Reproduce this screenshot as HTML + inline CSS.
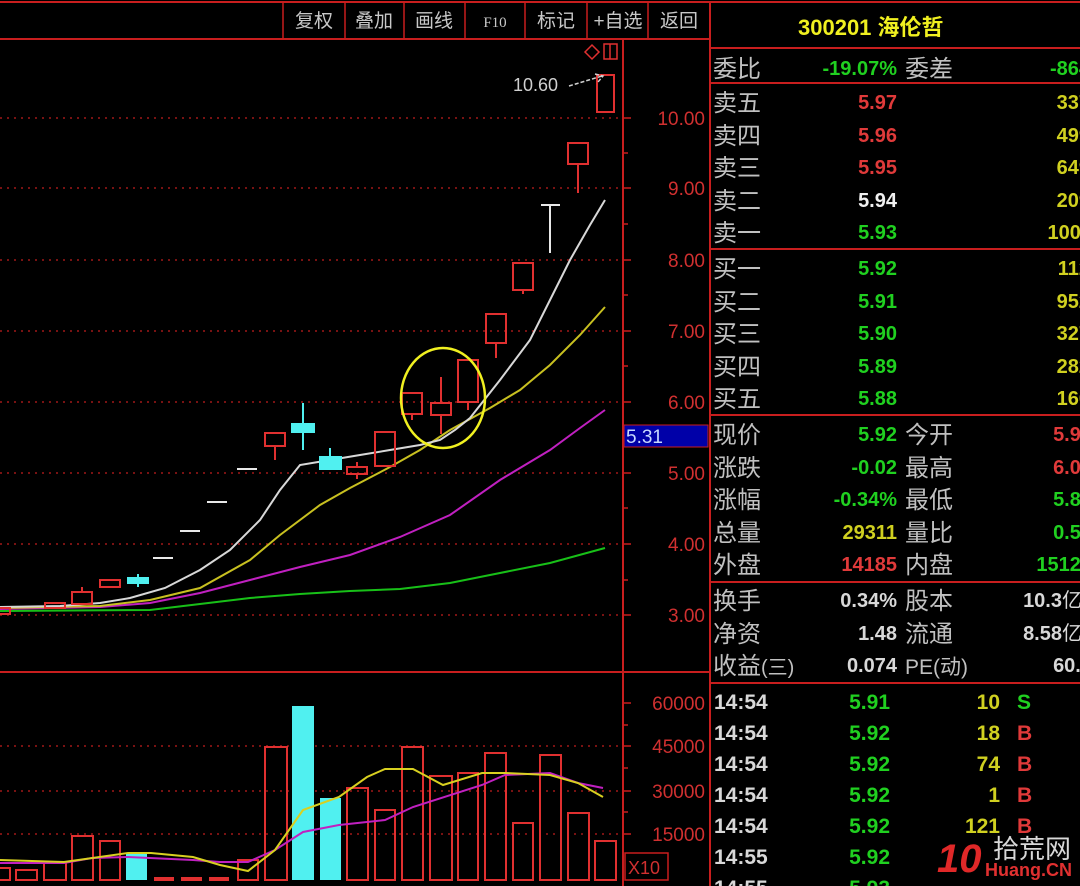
<!DOCTYPE html>
<html><head><meta charset="utf-8"><style>
html,body{margin:0;padding:0;background:#000;width:1080px;height:886px;overflow:hidden}
svg{display:block}
.cj{font-family:"Liberation Sans","WenQuanYi Zen Hei","Noto Sans CJK SC",sans-serif}
.nb{font-family:"Liberation Sans",sans-serif;font-weight:bold}
</style></head><body>
<svg width="1080" height="886" viewBox="0 0 1080 886" xmlns="http://www.w3.org/2000/svg">
<rect width="1080" height="886" fill="#000"/>
<!-- frame lines -->
<g stroke="#c81e1e" stroke-width="2" fill="none">
<line x1="0" y1="2" x2="1080" y2="2"/>
<line x1="0" y1="39" x2="710" y2="39"/>
<line x1="710" y1="2" x2="710" y2="886"/>
<line x1="623" y1="39" x2="623" y2="886"/>
<line x1="0" y1="672" x2="710" y2="672"/>
<line x1="710" y1="48" x2="1080" y2="48"/>
<line x1="710" y1="83" x2="1080" y2="83"/>
<line x1="710" y1="249" x2="1080" y2="249"/>
<line x1="710" y1="415" x2="1080" y2="415"/>
<line x1="710" y1="582" x2="1080" y2="582"/>
<line x1="710" y1="683" x2="1080" y2="683"/>
</g>
<g stroke="#c81e1e" stroke-width="1.5">
<line x1="283" y1="2" x2="283" y2="39"/><line x1="345" y1="2" x2="345" y2="39"/><line x1="404" y1="2" x2="404" y2="39"/><line x1="465" y1="2" x2="465" y2="39"/><line x1="525" y1="2" x2="525" y2="39"/><line x1="587" y1="2" x2="587" y2="39"/><line x1="648" y1="2" x2="648" y2="39"/>
</g>
<g class="cj" fill="#c8c8c8" font-size="19" text-anchor="middle">
<text x="314" y="27">复权</text><text x="374" y="27">叠加</text><text x="434" y="27">画线</text><text x="495" y="27" font-size="15" font-family="Liberation Serif">F10</text><text x="556" y="27">标记</text><text x="618" y="27">+自选</text><text x="679" y="27">返回</text>
</g>
<!-- grid -->
<g stroke="#a01818" stroke-width="1.5" stroke-dasharray="2 5">
<line x1="0" y1="118" x2="620" y2="118"/><line x1="0" y1="188" x2="620" y2="188"/><line x1="0" y1="260" x2="620" y2="260"/><line x1="0" y1="331" x2="620" y2="331"/><line x1="0" y1="402" x2="620" y2="402"/><line x1="0" y1="473" x2="620" y2="473"/><line x1="0" y1="544" x2="620" y2="544"/><line x1="0" y1="615" x2="620" y2="615"/>
<line x1="0" y1="746" x2="620" y2="746"/><line x1="0" y1="791" x2="620" y2="791"/><line x1="0" y1="834" x2="620" y2="834"/>
</g>
<!-- axis ticks -->
<g stroke="#c81e1e" stroke-width="1.5">
<line x1="623" y1="118" x2="631" y2="118"/><line x1="623" y1="153" x2="628" y2="153"/><line x1="623" y1="188" x2="631" y2="188"/><line x1="623" y1="224" x2="628" y2="224"/><line x1="623" y1="260" x2="631" y2="260"/><line x1="623" y1="295" x2="628" y2="295"/><line x1="623" y1="331" x2="631" y2="331"/><line x1="623" y1="366" x2="628" y2="366"/><line x1="623" y1="402" x2="631" y2="402"/><line x1="623" y1="473" x2="631" y2="473"/><line x1="623" y1="508" x2="628" y2="508"/><line x1="623" y1="544" x2="631" y2="544"/><line x1="623" y1="580" x2="628" y2="580"/><line x1="623" y1="615" x2="631" y2="615"/>
<line x1="623" y1="703" x2="631" y2="703"/><line x1="623" y1="725" x2="628" y2="725"/><line x1="623" y1="746" x2="631" y2="746"/><line x1="623" y1="768" x2="628" y2="768"/><line x1="623" y1="791" x2="631" y2="791"/><line x1="623" y1="812" x2="628" y2="812"/><line x1="623" y1="834" x2="631" y2="834"/>
</g>
<g font-family="Liberation Sans,sans-serif" font-size="19" fill="#d03030" text-anchor="end">
<text x="705" y="125">10.00</text><text x="705" y="195">9.00</text><text x="705" y="267">8.00</text><text x="705" y="338">7.00</text><text x="705" y="409">6.00</text><text x="705" y="480">5.00</text><text x="705" y="551">4.00</text><text x="705" y="622">3.00</text>
<text x="705" y="710">60000</text><text x="705" y="753">45000</text><text x="705" y="798">30000</text><text x="705" y="841">15000</text>
</g>
<rect x="624" y="425" width="84" height="22" fill="#0000a8" stroke="#c81e1e" stroke-width="1"/>
<text x="626" y="443" font-family="Liberation Sans,sans-serif" font-size="19" fill="#c8d8ff">5.31</text>
<rect x="625" y="853" width="43" height="27" fill="none" stroke="#c81e1e" stroke-width="1.5"/>
<text x="628" y="874" font-family="Liberation Sans,sans-serif" font-size="18" fill="#d03030">X10</text>
<!-- MA lines -->
<g fill="none" stroke-width="2">
<polyline stroke="#18c018" points="0,611 150,610 200,604 250,598 300,594 350,591 400,589 450,583 500,573 550,563 605,548"/>
<polyline stroke="#c020c0" points="0,609 100,607 150,603 200,593 250,580 300,567 350,555 400,537 450,515 500,480 550,450 580,428 605,410"/>
<polyline stroke="#c8c020" points="0,608 100,606 150,600 200,588 250,560 280,535 320,505 350,488 390,467 420,450 450,430 490,408 520,390 550,365 580,335 605,307"/>
<polyline stroke="#d8d8d8" points="0,607 60,606 100,603 130,598 165,588 200,570 230,550 260,520 280,490 300,465 330,460 360,455 390,450 420,445 440,440 455,430 470,418 500,380 530,340 550,300 570,260 590,225 605,200"/>
</g>
<!-- candles -->
<g fill="none" stroke="#e03030" stroke-width="2">
<rect x="-4" y="608" width="14" height="6"/>
<rect x="45" y="603" width="20" height="5"/>
<rect x="72" y="592" width="20" height="12"/><line x1="82" y1="587" x2="82" y2="592"/>
<rect x="100" y="580" width="20" height="7"/>
<rect x="265" y="433" width="20" height="13"/><line x1="275" y1="446" x2="275" y2="460"/>
<rect x="347" y="467" width="20" height="7"/><line x1="357" y1="462" x2="357" y2="467"/><line x1="357" y1="474" x2="357" y2="479"/>
<rect x="375" y="432" width="20" height="34"/>
<rect x="402" y="393" width="20" height="21"/><line x1="412" y1="414" x2="412" y2="420"/>
<rect x="431" y="403" width="20" height="12"/><line x1="441" y1="377" x2="441" y2="403"/><line x1="441" y1="415" x2="441" y2="434"/>
<rect x="458" y="360" width="20" height="42"/><line x1="468" y1="402" x2="468" y2="410"/>
<rect x="486" y="314" width="20" height="29"/><line x1="496" y1="343" x2="496" y2="358"/>
<rect x="513" y="263" width="20" height="27"/><line x1="523" y1="290" x2="523" y2="294"/>
<rect x="568" y="143" width="20" height="21"/><line x1="578" y1="164" x2="578" y2="193"/>
<rect x="597" y="75" width="17" height="37"/>
<rect x="604" y="44" width="13" height="15" stroke-width="1.5"/><line x1="610" y1="44" x2="610" y2="59" stroke-width="1.5"/>
<path d="M585,52 L592,45 L599,52 L592,59 Z" stroke-width="1.5"/>
</g>
<g fill="#50f0f0" stroke="#50f0f0" stroke-width="2">
<rect x="128" y="578" width="20" height="5"/><line x1="138" y1="574" x2="138" y2="587"/>
<rect x="292" y="424" width="22" height="8"/><line x1="303" y1="403" x2="303" y2="450"/>
<rect x="320" y="457" width="21" height="12"/><line x1="330" y1="448" x2="330" y2="457"/>
</g>
<g stroke="#e8e8e8" stroke-width="2">
<line x1="153" y1="558" x2="173" y2="558"/><line x1="180" y1="531" x2="200" y2="531"/><line x1="207" y1="502" x2="227" y2="502"/><line x1="237" y1="469" x2="257" y2="469"/>
<line x1="541" y1="205" x2="560" y2="205"/><line x1="550" y1="205" x2="550" y2="253"/>
</g>
<ellipse cx="443" cy="398" rx="42" ry="50" fill="none" stroke="#f0f020" stroke-width="2.5"/>
<text x="513" y="91" font-family="Liberation Sans,sans-serif" font-size="18" fill="#d0d0d0">10.60</text>
<path d="M569,86 L602,76 M595,74 L603,76 L598,82" stroke="#d0d0d0" stroke-width="1.5" fill="none" stroke-dasharray="4 2"/>
<!-- volume bars -->
<g fill="none" stroke="#e03030" stroke-width="2">
<rect x="-2" y="868" width="12" height="12"/><rect x="16" y="870" width="21" height="10"/><rect x="44" y="862" width="22" height="18"/><rect x="72" y="836" width="21" height="44"/><rect x="100" y="841" width="20" height="39"/>
<rect x="238" y="860" width="20" height="20"/><rect x="265" y="747" width="22" height="133"/><rect x="347" y="788" width="21" height="92"/><rect x="375" y="810" width="20" height="70"/><rect x="402" y="747" width="21" height="133"/><rect x="430" y="776" width="22" height="104"/><rect x="458" y="773" width="20" height="107"/><rect x="485" y="753" width="21" height="127"/><rect x="513" y="823" width="20" height="57"/><rect x="540" y="755" width="21" height="125"/><rect x="568" y="813" width="21" height="67"/><rect x="595" y="841" width="21" height="39"/>
</g>
<g fill="#e03030"><rect x="154" y="877" width="20" height="4"/><rect x="181" y="877" width="21" height="4"/><rect x="209" y="877" width="20" height="4"/></g>
<g fill="#50f0f0"><rect x="126" y="853" width="21" height="27"/><rect x="292" y="706" width="22" height="174"/><rect x="320" y="798" width="21" height="82"/></g>
<g fill="none" stroke-width="2">
<polyline stroke="#c020c0" points="0,863 64,863 92,858 128,857 193,860 220,862 248,862 275,850 303,832 339,825 385,820 413,807 482,785 505,775 550,773 578,783 603,788"/>
<polyline stroke="#d8d020" points="0,860 64,862 128,853 151,853 193,857 220,865 248,871 275,850 303,810 339,797 367,777 385,769 413,769 443,785 482,773 505,773 550,775 578,783 603,797"/>
</g>
<!-- right panel -->
<text x="798" y="35" class="cj" font-size="22" font-weight="bold" fill="#f0f020">300201 海伦哲</text>
<g class="cj" fill="#c0c0c0" font-size="24">
<text x="713" y="77">委比</text><text x="905" y="77">委差</text>
<text x="713" y="111">卖五</text><text x="713" y="144">卖四</text><text x="713" y="176">卖三</text><text x="713" y="209">卖二</text><text x="713" y="241">卖一</text>
<text x="713" y="277">买一</text><text x="713" y="310">买二</text><text x="713" y="342">买三</text><text x="713" y="375">买四</text><text x="713" y="407">买五</text>
<text x="713" y="443">现价</text><text x="905" y="443">今开</text><text x="713" y="476">涨跌</text><text x="905" y="476">最高</text><text x="713" y="508">涨幅</text><text x="905" y="508">最低</text><text x="713" y="541">总量</text><text x="905" y="541">量比</text><text x="713" y="573">外盘</text><text x="905" y="573">内盘</text>
<text x="713" y="609">换手</text><text x="905" y="609">股本</text><text x="713" y="642">净资</text><text x="905" y="642">流通</text><text x="713" y="674">收益<tspan font-size="20">(三)</tspan></text><text x="905" y="674" font-size="21">PE<tspan>(动)</tspan></text>
</g>
<g class="nb" font-size="20" text-anchor="end">
<text x="897" y="75" fill="#20d020">-19.07%</text><text x="1090" y="75" fill="#20d020">-864</text>
<text x="897" y="109" fill="#e03a3a">5.97</text><text x="897" y="142" fill="#e03a3a">5.96</text><text x="897" y="174" fill="#e03a3a">5.95</text><text x="897" y="207" fill="#f0f0f0">5.94</text><text x="897" y="239" fill="#20d020">5.93</text>
<text x="897" y="275" fill="#20d020">5.92</text><text x="897" y="308" fill="#20d020">5.91</text><text x="897" y="340" fill="#20d020">5.90</text><text x="897" y="373" fill="#20d020">5.89</text><text x="897" y="405" fill="#20d020">5.88</text>
<g fill="#d0d020"><text x="1090" y="109">337</text><text x="1090" y="142">499</text><text x="1090" y="174">649</text><text x="1090" y="207">209</text><text x="1092" y="239">1003</text><text x="1090" y="275">112</text><text x="1090" y="308">952</text><text x="1090" y="340">327</text><text x="1090" y="373">282</text><text x="1090" y="405">160</text></g>
<text x="897" y="441" fill="#20d020">5.92</text><text x="1092" y="441" fill="#e03a3a">5.98</text>
<text x="897" y="474" fill="#20d020">-0.02</text><text x="1092" y="474" fill="#e03a3a">6.02</text>
<text x="897" y="506" fill="#20d020">-0.34%</text><text x="1092" y="506" fill="#20d020">5.89</text>
<text x="897" y="539" fill="#d0d020">29311</text><text x="1092" y="539" fill="#20d020">0.59</text>
<text x="897" y="571" fill="#e03a3a">14185</text><text x="1092" y="571" fill="#20d020">15120</text>
<text x="897" y="607" fill="#d8d8d8">0.34%</text><text x="1082" y="607" fill="#d8d8d8">10.3<tspan class="cj" font-weight="normal">亿</tspan></text>
<text x="897" y="640" fill="#d8d8d8">1.48</text><text x="1082" y="640" fill="#d8d8d8">8.58<tspan class="cj" font-weight="normal">亿</tspan></text>
<text x="897" y="672" fill="#d8d8d8">0.074</text><text x="1092" y="672" fill="#d8d8d8">60.4</text>
</g>
<g class="nb" font-size="21">
<g fill="#d8d8d8"><text x="714" y="709">14:54</text><text x="714" y="740">14:54</text><text x="714" y="771">14:54</text><text x="714" y="802">14:54</text><text x="714" y="833">14:54</text><text x="714" y="864">14:55</text><text x="714" y="895">14:55</text></g>
<g fill="#20d020" text-anchor="end"><text x="890" y="709">5.91</text><text x="890" y="740">5.92</text><text x="890" y="771">5.92</text><text x="890" y="802">5.92</text><text x="890" y="833">5.92</text><text x="890" y="864">5.92</text><text x="890" y="895">5.93</text></g>
<g fill="#d0d020" text-anchor="end"><text x="1000" y="709">10</text><text x="1000" y="740">18</text><text x="1000" y="771">74</text><text x="1000" y="802">1</text><text x="1000" y="833">121</text></g>
<text x="1017" y="709" fill="#20d020">S</text>
<g fill="#e03a3a"><text x="1017" y="740">B</text><text x="1017" y="771">B</text><text x="1017" y="802">B</text><text x="1017" y="833">B</text></g>
</g>
<!-- watermark -->
<g>
<text x="937" y="872" font-family="Liberation Sans,sans-serif" font-weight="bold" font-style="italic" font-size="40" fill="#e02828">10</text>
<text x="993" y="858" class="cj" font-size="26" fill="#d8d8d8">拾荒网</text>
<text x="985" y="876" font-family="Liberation Sans,sans-serif" font-weight="bold" font-size="18" fill="#e03030">Huang.CN</text>
</g>
</svg>
</body></html>
